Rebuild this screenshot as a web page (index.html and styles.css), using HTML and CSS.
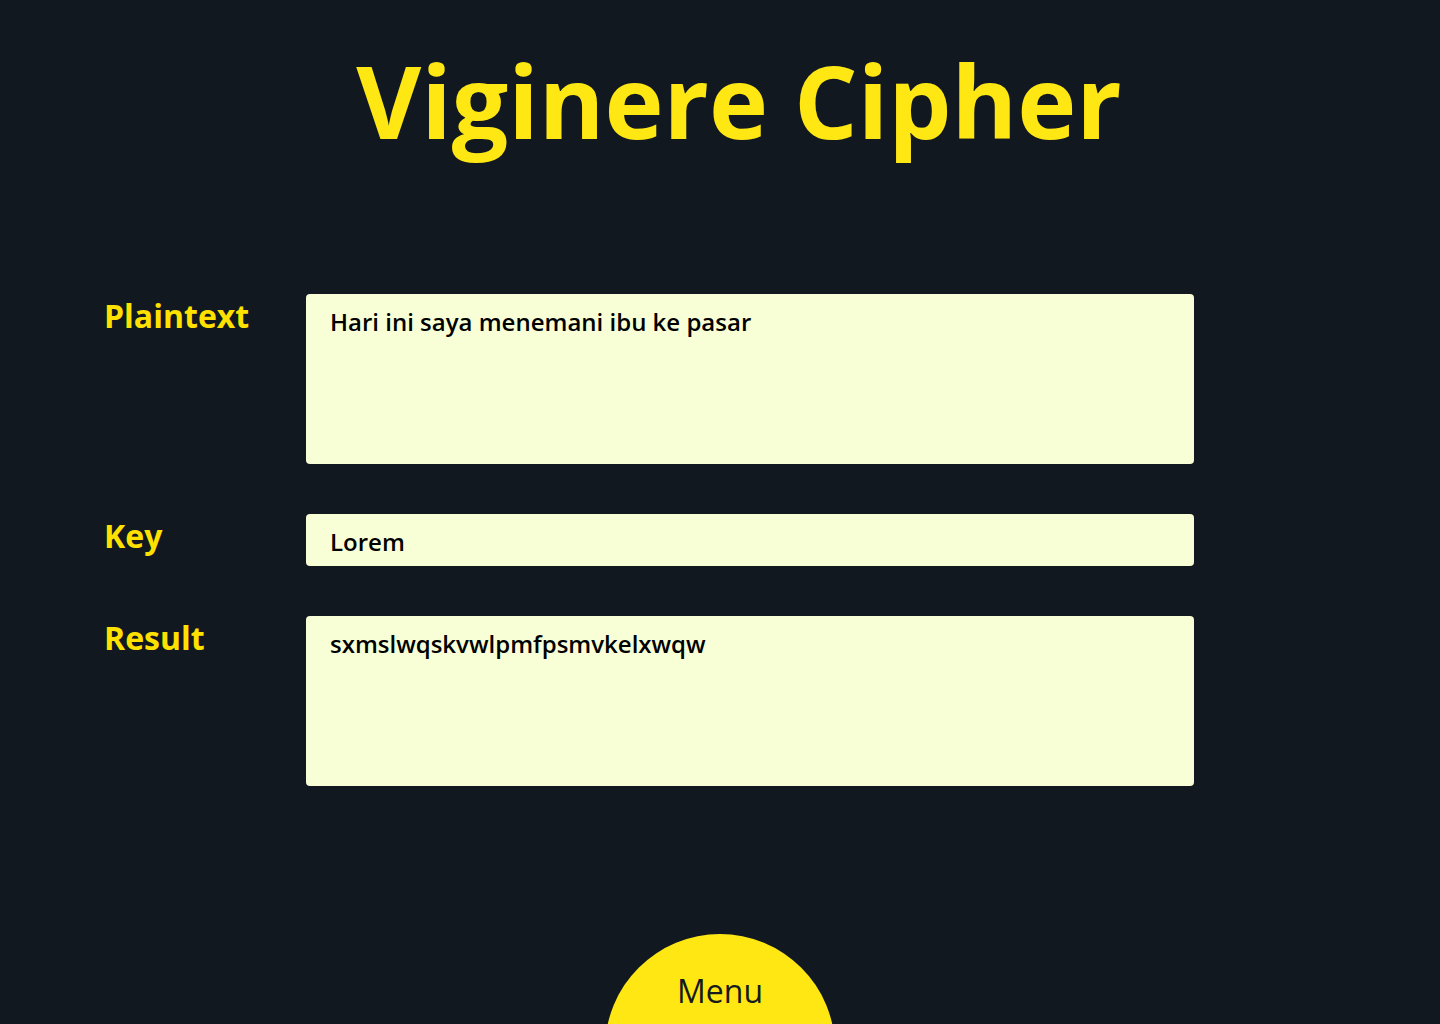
FILE: index.html
```html
<!DOCTYPE html>
<html lang="id">
<head>
<meta charset="utf-8">
<title>Viginere Cipher</title>
<link rel="stylesheet" href="styles.css">
</head>
<body>
<h1 class="title">Viginere Cipher</h1>
<main class="form">
  <label class="label" for="plain">Plaintext</label>
  <div class="box box-tall" id="plain">Hari ini saya menemani ibu ke pasar</div>
  <label class="label" for="key">Key</label>
  <div class="box box-short" id="key">Lorem</div>
  <label class="label" for="result">Result</label>
  <div class="box box-tall" id="result">sxmslwqskvwlpmfpsmvkelxwqw</div>
</main>
<div class="menu-wrap">
  <button class="menu">Menu</button>
</div>
</body>
</html>
```
FILE: styles.css
```css
* { box-sizing: border-box; }
html, body { margin: 0; padding: 0; }
body {
  background: #111820;
  font-family: "Open Sans", "Noto Sans", sans-serif;
  min-height: 1024px;
  overflow: hidden;
}
.title {
  margin: 32px 0 0;
  padding-left: 38px;
  text-align: center;
  color: #ffe714;
  font-size: 100px;
  font-weight: 700;
  line-height: 136px;
}
.form {
  display: grid;
  grid-template-columns: 202px 888px;
  row-gap: 50px;
  margin: 126px 0 0 104px;
}
.label {
  color: #ffe100;
  font-size: 32px;
  font-weight: 700;
  line-height: 43.6px;
}
.box {
  background: #f8ffd6;
  border-radius: 4px;
  color: #000;
  font-size: 24px;
  font-weight: 600;
  line-height: 32.7px;
  padding: 12px 24px 0;
}
.box-tall { height: 170px; }
.box-short { height: 52px; }
.menu-wrap {
  display: flex;
  justify-content: center;
  margin-top: 148px;
}
.menu {
  width: 230px;
  height: 230px;
  border: none;
  border-radius: 50%;
  background: #ffe714;
  color: #161a1f;
  font-family: "Open Sans", "Noto Sans", sans-serif;
  font-size: 32px;
  font-weight: 500;
  line-height: 43.6px;
  padding: 35px 0 0;
  display: flex;
  justify-content: center;
  align-items: flex-start;
}
```
